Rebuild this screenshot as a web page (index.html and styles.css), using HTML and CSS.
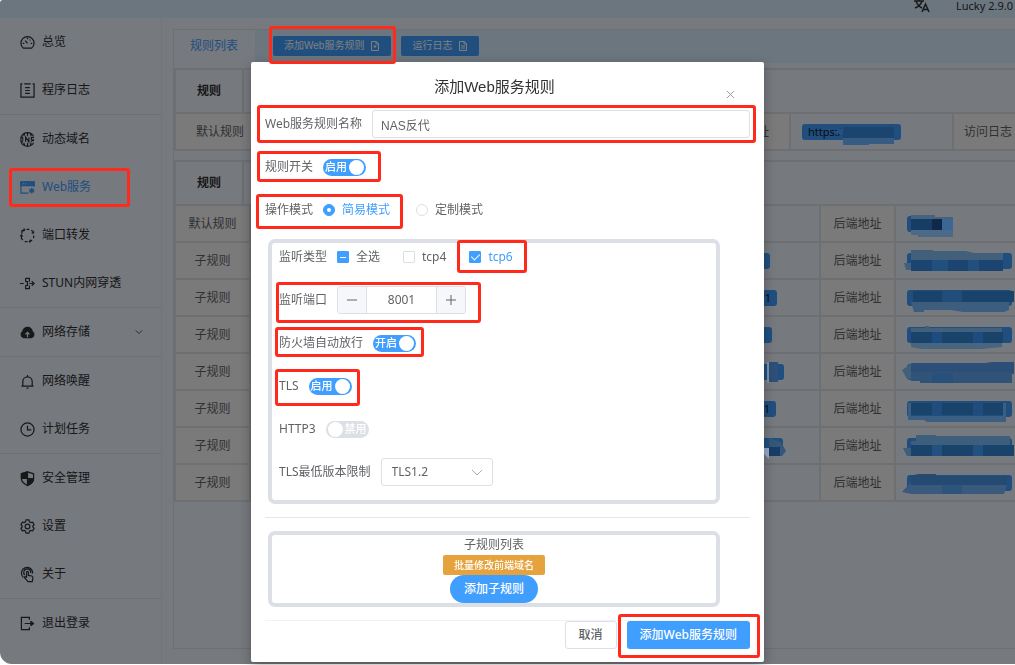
FILE: index.html
```html
<!DOCTYPE html>
<html lang="zh-CN">
<head>
    <meta charset="UTF-8">
    <meta name="viewport" content="width=device-width, initial-scale=1.0">
    <title>Lucky</title>
    <link rel="stylesheet" href="styles.css">
</head>
<body>
    <div class="app">
        <header class="topbar">
            <svg class="lang-icon" viewBox="0 0 16 14" fill="none" stroke="#303133" stroke-width="1.5"><path d="M0 2h10M5 0v2M2 2c1 3 4 6 6 7M8 2C7 5 4 8 1 9M8 13l3.500-8 3.500 8M9.500 10.500h4"/></svg>
            <span>Lucky 2.9.0</span>
        </header>
        <div class="layout">
            <nav class="sidebar">
                <a class="menu-item" href="#"><svg class="icon" viewBox="0 0 16 16"><path d="M3.500 14a7 7 0 1 1 9 0zM8 9L5.500 6M8 3v1.500M3 9h1.500M11.500 9H13M11 5l-.8.8"/></svg>总览</a>
                <a class="menu-item" href="#"><svg class="icon" viewBox="0 0 16 16"><path d="M2.500 1H1v14h14V1h-1.500M4.500 1h7M5.500 5h5M5.500 8h5M5.500 11h5"/></svg>程序日志</a>
                <a class="menu-item divided" href="#"><svg class="icon" viewBox="0 0 16 16"><path d="M1.500 4.500a7.500 7.500 0 0 1 13 0M1.500 11.500a7.500 7.500 0 0 0 13 0M8 .5v4M5 1.500L4 4.500M11 1.500l1 3M8 11.500v4M5 14.500l-1-3M11 14.500l1-3M1 5.500v5h1.500q1.500-2.500 0-5zM6 10.500v-5l3.500 5v-5M15 6q-3-1-3 .8T14 8.500t-2.500 1.800"/></svg>动态域名</a>
                <a class="menu-item active" href="#"><svg class="icon" viewBox="0 0 16 16"><path d="M15 7V2H1v12h8"/><path d="M1 2h14v4H1z" fill="currentColor"/><path d="M3 4h1M5.500 4h1" stroke="#ecf2fc"/><path d="M12.500 8.500v6M9.800 10l5.400 3M15.200 10l-5.400 3" stroke-width="1.600"/></svg>Web服务<span class="mark mark-menu"></span></a>
                <a class="menu-item" href="#"><svg class="icon" viewBox="0 0 16 16" stroke-width="1.500"><path d="M2 6V3l3-1M7 1.500h3M12 2.500l2 1V6M14.500 8v3M13 13l-3 1.500M8 14.500H5M3 13l-1.500-2V8M4 .5l1 1.500-1.500 1.500M12.500 5.500H14l1-1.500M11.500 12.500L10 14.500l1 1M.5 9l1-1.500L3 9"/></svg>端口转发</a>
                <a class="menu-item" href="#"><svg class="icon" viewBox="0 0 16 16"><path d="M0 8h4M6 2.500h4V6M10 10v3.500H6V10M6 2.500V6M6 6h2v4H6M10 8h5M12.500 5.500L15 8l-2.500 2.500"/></svg>STUN内网穿透</a>
                <a class="menu-item divided" href="#"><svg class="icon" viewBox="0 0 16 16"><path d="M4 13.500a3.500 3.500 0 0 1-1-6.500 5 4.500 0 0 1 10 0A3.500 3.500 0 0 1 12 13.500z" fill="currentColor"/><path d="M8 13V8M5.800 10L8 7.800 10.200 10" stroke="#ecf2fc"/></svg>网络存储<svg class="arrow" viewBox="0 0 10 10"><path d="M1 3l4 4 4-4"/></svg></a>
                <a class="menu-item divided" href="#"><svg class="icon" viewBox="0 0 16 16"><path d="M1.500 13h13M3 13V8a5 5 0 0 1 10 0v5M8 1v2M7 15h2"/></svg>网络唤醒</a>
                <a class="menu-item" href="#"><svg class="icon" viewBox="0 0 16 16"><circle cx="8" cy="8" r="7"/><path d="M8 4v4.500h4"/></svg>计划任务</a>
                <a class="menu-item divided" href="#"><svg class="icon" viewBox="0 0 16 16"><path d="M8 1l6.500 2v5q0 4.500-6.500 7.500Q1.500 12.500 1.500 8V3z"/><path d="M8 1v7H1.500V3zM8 8h6.500q0 4.500-6.500 7.500z" fill="currentColor"/></svg>安全管理</a>
                <a class="menu-item" href="#"><svg class="icon" viewBox="0 0 16 16"><circle cx="8" cy="8" r="2.500"/><path d="M6.500 1h3l.6 2 1.400.8 2-.5L15 6l-1.300 1.500v1L15 10l-1.500 2.700-2-.5-1.400.8-.6 2h-3l-.6-2-1.400-.8-2 .5L1 10l1.300-1.500v-1L1 6l1.500-2.700 2 .5L5.900 3z"/></svg>设置</a>
                <a class="menu-item" href="#"><svg class="icon" viewBox="0 0 16 16"><path d="M3.500 11a6 6 0 1 1 10-4M5 8.500a3.800 3.800 0 1 1 6.500-2M7 11V5.500q1-1.500 2 0V9l3.500.6q1.500.5 1.300 2L13 15.500H8.500L4.500 11q1-1.500 2.500.5"/></svg>关于</a>
                <a class="menu-item divided" href="#"><svg class="icon" viewBox="0 0 16 16" stroke-width="2"><path d="M10 4V1.500H1.500v13H10V12M5 8h8"/><path d="M11.500 5.500L15 8l-3.500 2.500z" fill="currentColor" stroke-width="1"/></svg>退出登录</a>
            </nav>
            <main class="card">
                <div class="tabs">
                    <a class="tab" href="#">规则列表</a>
                    <div class="toolbar">
                        <button class="btn-small" type="button">添加Web服务规则<svg class="doc" viewBox="0 0 10 10"><path d="M1.500.5h5l2 2v7h-7zM6 .5V3h2.500M5 4v3M3.500 5.500h3"/></svg><span class="mark mark-add"></span></button>
                        <button class="btn-small" type="button">运行日志<svg class="doc" viewBox="0 0 10 10"><path d="M1.500.5h5l2 2v7h-7zM6 .5V3h2.500M3 5h4M3 7h4"/></svg></button>
                    </div>
                </div>

                <section class="rules">
                    <div class="rules-head"><span class="rules-name">规则</span></div>
                    <table class="grid">
                        <colgroup><col class="col-main"><col><col class="col-front"><col class="col-url"><col class="col-log"></colgroup>
                        <tr>
                            <th>默认规则</th>
                            <td></td>
                            <th>前端地址</th>
                            <td class="addr"><span class="tag wide">https://</span><svg class="mosaic" width="130" height="36"><path fill="#1b456f" d="M52 13h51v11H52z"/><path fill="#24517f" d="M44 18l8-5v9z"/><path fill="#365c84" d="M52 24h51v6H78v1H52z"/></svg></td>
                            <th class="last">访问日志</th>
                        </tr>
                    </table>
                </section>

                <section class="rules">
                    <div class="rules-head"><span class="rules-name">规则</span></div>
                    <table class="grid">
                        <colgroup><col class="col-label"><col><col class="col-tag"><col class="col-label"><col class="col-back"></colgroup>
                        <tr>
                            <th>默认规则</th><td></td><td class="port"></td><th>后端地址</th>
                            <td class="addr"><span class="tag short"></span><svg class="mosaic" width="118" height="36"><path fill="#46627d" d="M15 9h24v2h18v2H15z"/><path fill="#163d66" d="M15 13h21v11H15z"/><path fill="#0f2a49" d="M36 13h10v11H36z"/><path fill="#3c6696" d="M46 13h11v11H46z"/><path fill="#4c6987" d="M15 24h42v7H22v-2h-7z"/></svg></td>
                        </tr>
                        <tr>
                            <th>子规则</th><td></td><td class="port"><span class="tag" style="width: 20px"></span></td><th>后端地址</th>
                            <td class="addr"><span class="tag"></span><svg class="mosaic" width="118" height="36"><path fill="#42607c" d="M15 7h22v1h33l8 2h29v8H15zM8 20h7v7h-5z"/><path fill="#1b4470" d="M15 17h92v11H15z"/><path fill="#21507f" d="M36 17h16v11H36zM72 17h11v11H72z"/></svg></td>
                        </tr>
                        <tr>
                            <th>子规则</th><td></td><td class="port"><span class="tag" style="width: 27px">71</span></td><th>后端地址</th>
                            <td class="addr"><span class="tag">H</span><svg class="mosaic" width="118" height="36"><path fill="#1a436c" d="M17 11h101v11H17z"/><path fill="#204d79" d="M46 11h20v11H46z"/><path fill="#3c5d7d" d="M15 22h98v8l-5 2H67l-12-2H28v2H18z"/></svg></td>
                        </tr>
                        <tr>
                            <th>子规则</th><td></td><td class="port"><span class="tag" style="width: 22px">1</span></td><th>后端地址</th>
                            <td class="addr"><span class="tag"></span><svg class="mosaic" width="118" height="36"><path fill="#42607c" d="M15 11h14v-2h4v2h73v4H15z"/><path fill="#1a436c" d="M15 15h92v11H15z"/><path fill="#1d4d80" d="M36 15h10v11H36zM77 15h10v11H77z"/><path fill="#486580" d="M15 26h91v4l-20 2H26l-11-2z"/></svg></td>
                        </tr>
                        <tr>
                            <th>子规则</th><td></td><td class="port"><span class="tag" style="width: 34px">4</span><svg class="mosaic" width="70" height="36"><path fill="#8195ac" d="M17 8h2v21h-2z"/><path fill="#2d5078" d="M19 8h9v20h-9z"/></svg></td><th>后端地址</th>
                            <td class="addr"><span class="tag"></span><svg class="mosaic" width="118" height="36"><path fill="#42607c" d="M6 16l9-6v15h-4z"/><path fill="#2c4f77" d="M15 9h74l7-1h22v12H15z"/><path fill="#315378" d="M15 18h101v11H24v-2h-9z"/><path fill="#27507a" d="M36 19h21v10H36z"/></svg></td>
                        </tr>
                        <tr>
                            <th>子规则</th><td></td><td class="port"><span class="tag" style="width: 26px">1</span></td><th>后端地址</th>
                            <td class="addr"><span class="tag"></span><svg class="mosaic" width="118" height="36"><path fill="#1a436c" d="M15 12h92v12H15z"/><path fill="#204d7d" d="M36 12h10v12H36zM77 12h10v12H77z"/><path fill="#3b5f82" d="M12 12h3v13h92V12h3v19H31l-3-2H12z"/></svg></td>
                        </tr>
                        <tr>
                            <th>子规则</th><td></td><td class="port"><span class="tag" style="width: 33px"></span><svg class="mosaic" width="70" height="36"><path fill="#97aac7" d="M13 20h6v11l-6-6z"/><path fill="#173d66" d="M19 18h11v10H19z"/><path fill="#355779" d="M19 10l12 4 5 9-4 5h-2v-9H19z"/></svg></td><th>后端地址</th>
                            <td class="addr"><span class="tag"></span><svg class="mosaic" width="118" height="36"><path fill="#3e5e7e" d="M20 7h20v1h74v10H15v-5h5zM7 20h8v8h-4z"/><path fill="#1a436c" d="M15 17h103v11H15z"/><path fill="#23517f" d="M36 17h10v11H36zM77 17h10v11H77z"/></svg></td>
                        </tr>
                        <tr>
                            <th>子规则</th><td></td><td class="port"></td><th>后端地址</th>
                            <td class="addr"><span class="tag"></span><svg class="mosaic" width="118" height="36"><path fill="#244a72" d="M15 11l7-2h18v2h71v9H15z"/><path fill="#3a5a7d" d="M15 20h96l-3 9H15l-9-2 9-10z"/><path fill="#2c547c" d="M46 20h20v9H46z"/></svg></td>
                        </tr>
                    </table>
                </section>
            </main>
        </div>
    </div>

    <div class="overlay"></div>

    <div class="dialog" role="dialog" aria-labelledby="dialogTitle">
        <div class="dialog-header">
            <h1 id="dialogTitle">添加Web服务规则</h1>
            <button class="close" type="button" aria-label="关闭"><svg viewBox="0 0 10 10"><path d="M1 1l8 8M9 1L1 9"/></svg></button>
        </div>
        <form>
            <div class="row">
                <label for="ruleName">Web服务规则名称</label>
                <input class="text-input" type="text" id="ruleName" value="NAS反代">
                <span class="mark mark-name"></span>
            </div>
            <div class="row">
                <label for="ruleOn">规则开关</label>
                <span class="switch"><input type="checkbox" id="ruleOn" checked><span>启用</span></span>
                <span class="mark mark-switch"></span>
            </div>
            <div class="row">
                <span>操作模式</span>
                <label class="option"><input type="radio" name="mode" checked><span>简易模式</span></label>
                <label class="option"><input type="radio" name="mode"><span>定制模式</span></label>
                <span class="mark mark-mode"></span>
            </div>

            <div class="box">
                <div class="row">
                    <span>监听类型</span>
                    <label class="option"><input class="partial" type="checkbox"><span>全选</span></label>
                    <label class="option"><input type="checkbox"><span>tcp4</span></label>
                    <label class="option"><input type="checkbox" checked><span>tcp6</span><span class="mark mark-tcp6"></span></label>
                </div>
                <div class="row">
                    <label for="port">监听端口</label>
                    <div class="stepper">
                        <button type="button" aria-label="减少"><svg viewBox="0 0 10 10"><path d="M0 5h10"/></svg></button>
                        <input type="text" inputmode="numeric" id="port" value="8001">
                        <button type="button" aria-label="增加"><svg viewBox="0 0 10 10"><path d="M0 5h10M5 0v10"/></svg></button>
                    </div>
                    <span class="mark mark-port"></span>
                </div>
                <div class="row">
                    <label for="firewall">防火墙自动放行</label>
                    <span class="switch"><input type="checkbox" id="firewall" checked><span>开启</span></span>
                    <span class="mark mark-firewall"></span>
                </div>
                <div class="row">
                    <label for="tls">TLS</label>
                    <span class="switch"><input type="checkbox" id="tls" checked><span>启用</span></span>
                    <span class="mark mark-tls"></span>
                </div>
                <div class="row">
                    <label for="http3">HTTP3</label>
                    <span class="switch"><input type="checkbox" id="http3"><span>禁用</span></span>
                </div>
                <div class="row">
                    <label for="tlsMin">TLS最低版本限制</label>
                    <div class="select">
                        <select id="tlsMin"><option>TLS1.2</option></select>
                        <svg viewBox="0 0 10 10"><path d="M0 3l5 5 5-5"/></svg>
                    </div>
                </div>
            </div>

            <hr>

            <div class="box sub-rules">
                <span>子规则列表</span>
                <button class="btn-warning" type="button">批量修改前端域名</button>
                <button class="btn btn-round" type="button">添加子规则</button>
            </div>

            <div class="dialog-footer">
                <button class="btn btn-plain" type="button">取消</button>
                <button class="btn" type="button">添加Web服务规则<span class="mark mark-submit"></span></button>
            </div>
        </form>
    </div>
</body>
</html>
```

FILE: styles.css
```css
* {
    box-sizing: border-box;
}
body {
    margin: 0;
    height: 100vh;
    overflow: hidden;
    background: white;
    color: #303133;
    font-family: "Noto Sans", "Noto Sans CJK SC", sans-serif;
    font-size: 12px;
    line-height: 20px;
}
a {
    color: inherit;
    text-decoration: none;
}
button, input, select {
    font: inherit;
    color: inherit;
    margin: 0;
}
button {
    padding: 0;
    border: none;
    cursor: pointer;
}
svg {
    fill: none;
    stroke: currentColor;
    flex: none;
}

/* page */
.app {
    display: flex;
    flex-direction: column;
    height: calc(100vh - 1px);
    background: #ecf2fc;
    border-radius: 3px 0 0 12px;
    overflow: hidden;
}
.topbar {
    display: flex;
    justify-content: flex-end;
    align-items: center;
    gap: 26px;
    height: 18px;
    padding: 0 2px 6px 0;
    background: #d9ecff;
    font-size: 11px;
    line-height: 12px;
    white-space: nowrap;
}
.lang-icon {
    width: 16px;
    height: 14px;
}
.layout {
    display: flex;
    flex: 1;
    min-height: 0;
}
.sidebar {
    width: 162px;
    flex: none;
    border-right: 1px solid #e2e7f0;
}
.menu-item {
    position: relative;
    display: flex;
    align-items: center;
    gap: 7px;
    height: 48px;
    padding-left: 20px;
}
.menu-item.divided {
    height: 49px;
    border-top: 1px solid #dcdfe6;
}
.menu-item.active {
    color: #409eff;
}
.icon {
    width: 15px;
    height: 15px;
    overflow: visible;
    stroke-width: 1.3;
}
.arrow {
    width: 8px;
    height: 8px;
    margin: 0 18px 0 auto;
}

.card {
    flex: 1;
    min-width: 0;
    margin: 11px 0 15px 11px;
    border: 1px solid #dcdfe6;
    border-right: none;
}
.tabs {
    display: flex;
    height: 33px;
    background: #d9ecff;
}
.tab {
    padding: 6px 17px 0 16px;
    background: #ecf2fc;
    color: #409eff;
}
.toolbar {
    display: flex;
    gap: 10px;
    padding: 6px 0 0 18px;
}
.btn-small {
    position: relative;
    display: flex;
    align-items: center;
    gap: 6px;
    height: 20px;
    padding: 0 11px;
    border-radius: 2px;
    background: #409eff;
    color: white;
    font-family: "Liberation Sans", "Noto Sans CJK SC", sans-serif;
    font-size: 10px;
    line-height: 20px;
}
.doc {
    width: 10px;
    height: 10px;
}

.rules {
    margin: 5px 0 9px;
    border: 2px solid #dcdfe6;
    border-right: none;
    border-bottom: none;
}
.rules-head {
    display: flex;
    height: 42px;
}
.rules-name {
    width: 68px;
    padding-top: 11px;
    border-right: 2px solid #dcdfe6;
    font-weight: bold;
    text-align: center;
}
.grid {
    width: 100%;
    table-layout: fixed;
    border-spacing: 0;
    border-top: 2px solid #dcdfe6;
    color: #606266;
}
.grid th, .grid td {
    height: 37px;
    padding: 0;
    border-right: 2px solid #dcdfe6;
    border-bottom: 2px solid #dcdfe6;
    text-align: center;
}
.grid th {
    background: #f5f5f5;
    font-weight: normal;
}
.grid td:nth-child(2) {
    border-right: none;
}
.grid td.addr, .grid td.port {
    position: relative;
    text-align: left;
}
.grid td.addr {
    padding-left: 11px;
}
.grid .last, .grid td.addr:last-child {
    border-right: none;
}
.col-main, .col-front { width: 90px; }
.col-url { width: 163px; }
.col-log { width: 61px; }
.col-label { width: 75px; }
.col-tag { width: 71px; }
.col-back { width: 119px; }
.grid th.last {
    padding-left: 10px;
    text-align: left;
    white-space: nowrap;
}
.tag {
    display: block;
    width: 105px;
    height: 16px;
    padding-left: 6px;
    border-radius: 3px;
    background: #409eff;
    color: #101820;
    font-size: 11px;
    line-height: 16px;
}
.port .tag {
    padding: 0 6px 0 0;
    text-align: right;
}
.tag.wide { width: 99px; }
.tag.short { width: 20px; }
.mosaic {
    position: absolute;
    left: 0;
    top: 0;
    z-index: 11;
    stroke: none;
}

.overlay {
    position: fixed;
    inset: 0 0 1px;
    z-index: 10;
    background: rgba(0, 0, 0, 0.5);
    border-radius: 3px 0 0 12px;
}

/* dialog */
.dialog {
    position: absolute;
    top: 62px;
    left: 0;
    right: 0;
    z-index: 12;
    width: 513px;
    max-width: 100%;
    margin: 0 auto;
    padding: 14px 14px 13px;
    border-radius: 2px;
    background: white;
    color: #606266;
    box-shadow: 0 4px 12px rgba(0, 0, 0, 0.3);
}
.dialog-header {
    display: flex;
    height: 34px;
}
h1 {
    flex: 1;
    margin: 0 0 0 8px;
    color: #303133;
    font-family: "Liberation Sans", "Noto Sans CJK SC", sans-serif;
    font-size: 15px;
    font-weight: normal;
    line-height: 22px;
    text-align: center;
}
.close {
    align-self: flex-end;
    width: 28px;
    height: 28px;
    margin: 0 6px 1px 0;
    background: none;
    color: #909399;
}
.close svg {
    width: 9px;
    height: 9px;
}
.row {
    position: relative;
    display: flex;
    align-items: center;
    gap: 10px;
    height: 28px;
    margin-bottom: 15px;
    white-space: nowrap;
}
.text-input {
    flex: 1;
    min-width: 0;
    height: 28px;
    padding: 0 8px;
    border: 1px solid #dcdfe6;
    border-radius: 3px;
    font-family: "Liberation Sans", "Noto Sans CJK SC", sans-serif;
}
.switch {
    display: flex;
    flex-direction: row;
    align-items: center;
    gap: 2px;
    width: 43px;
    height: 17px;
    padding: 0 2px;
    border-radius: 9px;
    background: #dcdfe6;
    color: white;
    font-size: 11px;
    font-weight: 500;
}
.switch:has(:checked) {
    flex-direction: row-reverse;
    background: #409eff;
}
.switch input {
    appearance: none;
    width: 15px;
    height: 15px;
    border-radius: 50%;
    background: white;
}
.option {
    position: relative;
    display: flex;
    align-items: center;
    gap: 7px;
    margin-right: 12px;
}
.option + .option {
    margin-left: 4px;
}
.box .option {
    margin-right: 9px;
}
.option input {
    appearance: none;
    display: grid;
    place-items: center;
    width: 12px;
    height: 12px;
    border: 1px solid #dcdfe6;
    border-radius: 1px;
    background: white;
}
.option input[type="radio"] {
    border-radius: 50%;
}
.option input:checked, .option input.partial {
    border-color: #409eff;
    background: #409eff;
}
.option input:checked + span {
    color: #409eff;
}
.option input[type="radio"]:checked::after {
    content: "";
    width: 4px;
    height: 4px;
    border-radius: 50%;
    background: white;
}
.option input[type="checkbox"]:checked::after {
    content: "";
    width: 4px;
    height: 7px;
    margin-bottom: 2px;
    border: solid white;
    border-width: 0 1px 1px 0;
    transform: rotate(45deg);
}
.option input.partial::after {
    content: "";
    width: 6px;
    height: 1px;
    background: white;
}

.box {
    margin: 0 30px 13px 3px;
    padding: 0 7px;
    border: 4px solid #dcdfe6;
    border-radius: 7px;
}
.box .row:last-child {
    margin-bottom: 14px;
}
.stepper {
    display: flex;
    width: 129px;
    height: 28px;
    border: 1px solid #dcdfe6;
    border-radius: 3px;
    overflow: hidden;
}
.stepper button {
    width: 28px;
    background: #f5f7fa;
}
.stepper svg {
    display: block;
    width: 10px;
    height: 10px;
    margin: 0 auto;
}
.stepper input {
    flex: 1;
    min-width: 0;
    padding: 0;
    border: solid #dcdfe6;
    border-width: 0 1px;
    text-align: center;
}
.select {
    position: relative;
    width: 112px;
}
.select select {
    display: block;
    appearance: none;
    width: 100%;
    height: 28px;
    padding: 0 10px;
    border: 1px solid #dcdfe6;
    border-radius: 3px;
    background: white;
}
.select svg {
    position: absolute;
    top: 9px;
    right: 11px;
    width: 10px;
    height: 10px;
    color: #a8abb2;
    pointer-events: none;
}
hr {
    margin: 0 0 13px;
    border: none;
    border-top: 1px solid #e4e7ed;
}
.sub-rules {
    display: flex;
    flex-direction: column;
    align-items: center;
}
.btn-warning {
    height: 20px;
    padding: 0 11px;
    border-radius: 2px;
    background: #e6a23c;
    color: white;
    font-size: 10px;
    font-weight: 500;
    line-height: 20px;
}
.btn {
    position: relative;
    height: 28px;
    padding: 0 13px;
    border-radius: 3px;
    background: #409eff;
    color: white;
    font-weight: 500;
}
.btn-round {
    padding: 0 14px;
    border-radius: 14px;
}
.btn-plain {
    border: 1px solid #dcdfe6;
    background: white;
    color: #606266;
}
.dialog-footer {
    display: flex;
    justify-content: flex-end;
    gap: 10px;
    border-top: 1px solid #f0f2f8;
}

/* red callouts, drawn over everything */
.mark {
    position: absolute;
    z-index: 20;
    border: 3px solid #ff2a1c;
    border-radius: 3px;
    pointer-events: none;
}
.mark-menu { inset: 5px 31px 4px 9px; }
.mark-add { inset: -10px -5px -8px -4px; }
.mark-name { inset: -5px -6px -5px -8px; }
.mark-switch { inset: -2px auto -1px -8px; width: 124px; }
.mark-mode { inset: -2px auto -5px -9px; width: 147px; }
.mark-tcp6 { inset: -7px -14px -6px -12px; }
.mark-port { inset: -4px auto -9px -3px; width: 205px; }
.mark-firewall { inset: -2px auto 0 -4px; width: 149px; }
.mark-tls { inset: -3px auto -6px -4px; width: 85px; }
.mark-submit { inset: -7px -10px -9px -9px; }
```
